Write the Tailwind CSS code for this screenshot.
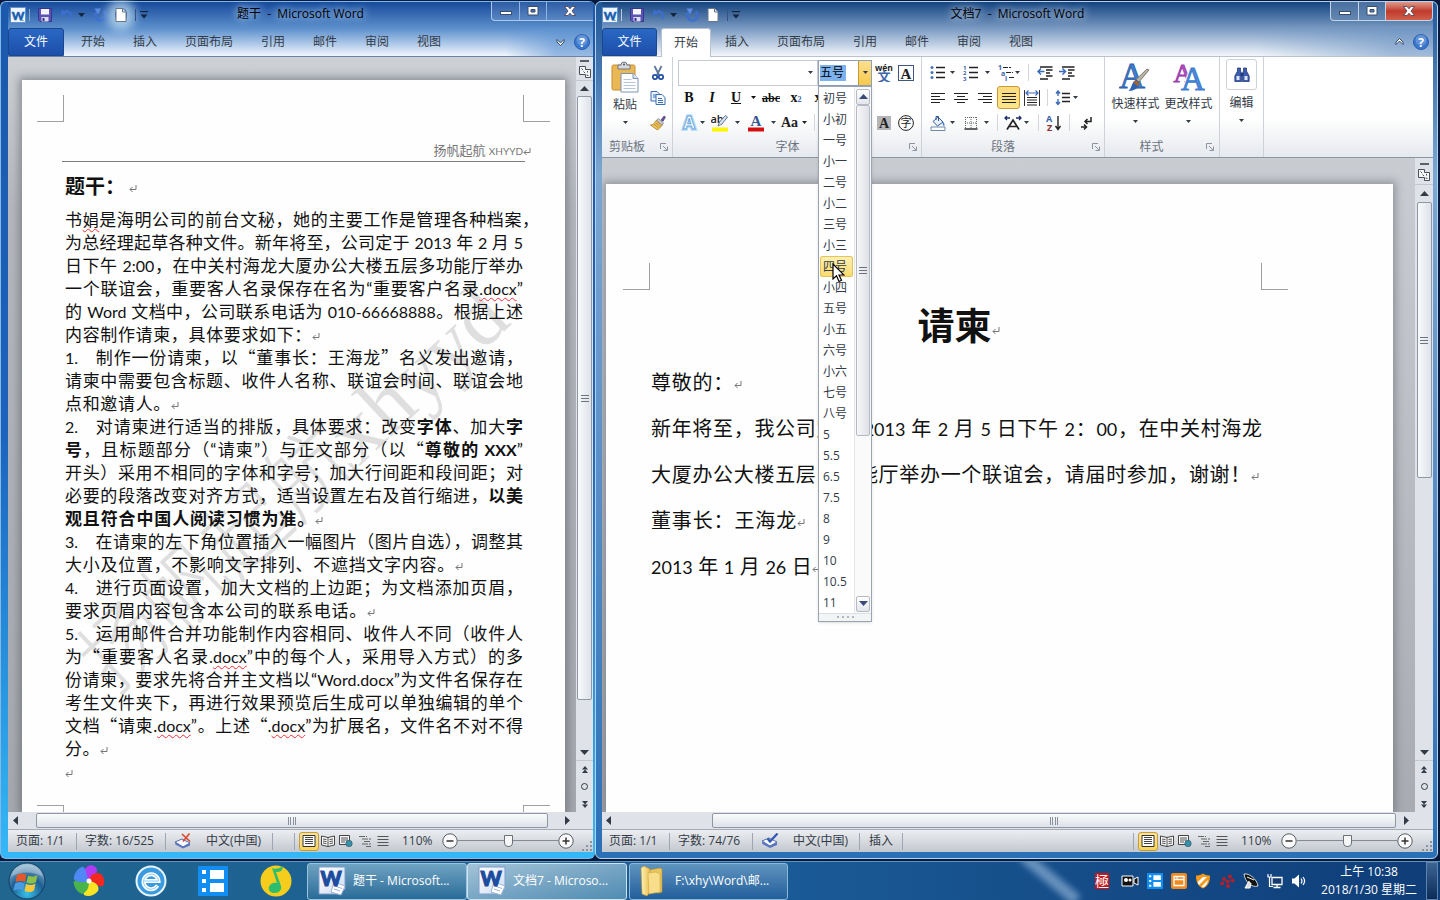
<!DOCTYPE html>
<html lang="zh-CN">
<head>
<meta charset="utf-8">
<title>文档7 - Microsoft Word</title>
<script src="https://cdn.jsdelivr.net/npm/@tailwindcss/browser@4"></script>
</head>
<body class="flex h-screen flex-col overflow-hidden bg-[#071a3d] font-['Open_Sans','Noto_Sans_CJK_SC',sans-serif] text-xs text-[#333b47]">

<svg class="absolute size-0" aria-hidden="true">
  <defs>
    <linearGradient id="gPaper" x1="0" y1="0" x2="1" y2="1"><stop offset="0" stop-color="#fff"/><stop offset="1" stop-color="#cfdcf0"/></linearGradient>
    <linearGradient id="gFolder" x1="0" y1="0" x2="1" y2="0"><stop offset="0" stop-color="#fff3b8"/><stop offset="1" stop-color="#e8bf4c"/></linearGradient>
    <radialGradient id="gOrb" cx=".5" cy=".85" r=".9"><stop offset="0" stop-color="#37c0ea"/><stop offset=".5" stop-color="#1e5f93"/><stop offset="1" stop-color="#a9cbe0"/></radialGradient>

    <symbol id="caret" viewBox="0 0 7 4"><path d="M0 0h7L3.500 4z" fill="currentColor"/></symbol>
    <symbol id="word" viewBox="0 0 16 16"><rect x=".5" y=".5" width="15" height="15" fill="#eef5fd" stroke="#5f93cf"/><path d="M10 13.500h4" stroke="#9ab"/><text x="8" y="12.500" font-size="12" font-weight="900" font-family="Lato" text-anchor="middle" fill="#1a5fae" stroke="#1a5fae" stroke-width=".5">W</text></symbol>
    <symbol id="save" viewBox="0 0 14 14"><path d="M.5.5h13v13H2l-1.500-1.500z" fill="#5a55b5" stroke="#39358c"/><path d="M3 1h8v5.500H3z" fill="#f4f5ff"/><path d="M3.500 9h7v4.500h-7z" fill="#dcdcf2"/><path d="M4.500 10h2v3h-2z" fill="#39358c"/></symbol>
    <symbol id="undo" viewBox="0 0 14 14"><path d="M3.500 5.500C7 1.500 13 4 10 11" fill="none" stroke="#3d6fd0" stroke-width="2.200"/><path d="M.5 7.500 2 1.500 6.500 6z" fill="#3d6fd0"/></symbol>
    <symbol id="redo" viewBox="0 0 14 14"><path d="M10.500 3.500A5 5 0 1 1 3.500 4.500" fill="none" stroke="#3d6fd0" stroke-width="2.600"/><path d="M1.500.5H8L5 6.500z" fill="#5b8be4"/></symbol>
    <symbol id="newdoc" viewBox="0 0 12 14"><path d="M1 .5h6.500l3.500 3.500v9.500H1z" fill="#fff" stroke="#6b7787"/><path d="M7.500.5V4H11" fill="#dde5ef" stroke="#6b7787"/></symbol>
    <symbol id="qat" viewBox="0 0 8 8"><path d="M0 .5h8" stroke="#14243c" stroke-width="1.400"/><path d="M.5 3.500h7L4 7.500z" fill="#14243c"/></symbol>
    <symbol id="help" viewBox="0 0 16 16"><circle cx="8" cy="8" r="7.500" fill="#3a78cf" stroke="#2a5cab"/><circle cx="8" cy="6" r="5.500" fill="#fff" opacity=".2"/><text x="8" y="12.500" font-size="12" font-weight="bold" font-family="Open Sans" text-anchor="middle" fill="#fff">?</text></symbol>
    <symbol id="chevdown" viewBox="0 0 9 8"><path d="M1 1.500 4.500 5 8 1.500V4L4.500 7.500 1 4z" fill="#fff" stroke="#2a3c58" stroke-width=".9"/></symbol>
    <symbol id="chevup" viewBox="0 0 9 8"><path d="M1 6.500 4.500 3 8 6.500V4L4.500.5 1 4z" fill="#fff" stroke="#2a3c58" stroke-width=".9"/></symbol>

    <symbol id="min" viewBox="0 0 12 10"><rect x=".5" y="5.500" width="11" height="3" fill="#fff" stroke="#3a4d68"/></symbol>
    <symbol id="max" viewBox="0 0 12 10"><path d="M1 .5h10v8.500H1zM4 3.500v2.500h4V3.500z" fill="#fff" fill-rule="evenodd" stroke="#3a4d68"/></symbol>
    <symbol id="close" viewBox="0 0 12 10"><path d="M.5.5h3.500L6 2.800 8 .5h3.500L8 5l3.500 4.500H8L6 7.200 4 9.500H.5L4 5z" fill="#fff" stroke="#4b3b4a" stroke-width=".8"/></symbol>

    <symbol id="ret" viewBox="0 0 8 8"><path d="M7 0v4.500H1M3.500 2 1 4.500 3.500 7" fill="none" stroke="#777" stroke-width="1"/></symbol>

    <symbol id="paste" viewBox="0 0 28 32"><rect x="1" y="4" width="23" height="25" rx="1.500" fill="#eab755" stroke="#c98d2c"/><path d="M7 8V4h3a3 3 0 0 1 6 0h3v4z" fill="#d5d9df" stroke="#6d7784"/><circle cx="13" cy="3.500" r="1" fill="#556"/><path d="M10 12.500h12l5 5V31H10z" fill="#fff" stroke="#7d93b3"/><path d="M22 12.500v5h5" fill="#dbe6f5" stroke="#7d93b3"/><path d="M12.500 18.500h8M12.500 21.500h12M12.500 24.500h12M12.500 27.500h12" stroke="#b5c5dc"/></symbol>
    <symbol id="cut" viewBox="0 0 16 16"><path d="M4.500 1 9 10M11.500 1 7 10" stroke="#5c7699" stroke-width="1.700" fill="none"/><circle cx="5" cy="12" r="2.200" fill="none" stroke="#1f4ea3" stroke-width="1.700"/><circle cx="11" cy="12" r="2.200" fill="none" stroke="#1f4ea3" stroke-width="1.700"/></symbol>
    <symbol id="copy" viewBox="0 0 16 16"><path d="M1 1.500h6l2.500 2.500v7H1z" fill="#e8f1fd" stroke="#3a6db4"/><path d="M3 5h4M3 7h4" stroke="#3a6db4"/><path d="M6 4.500h6l3 3v7H6z" fill="#f5f9ff" stroke="#3a6db4"/><path d="M8 8.500h4M8 10.500h5M8 12.500h5" stroke="#3a6db4"/></symbol>
    <symbol id="brush" viewBox="0 0 16 16"><path d="m11 5 3-4 1.500 1-2.500 4.500z" fill="#6b4a9a" stroke="#3d3768" stroke-width=".6"/><path d="m6.500 5 2-1.500 5 4.500-1.500 2.500z" fill="#c9ccd5" stroke="#777" stroke-width=".7"/><path d="M6 5.500 12 10.500 7.500 15 .5 10c3 0 4-2 5.500-4.500z" fill="#efc45a" stroke="#a97b25" stroke-width=".8"/><path d="m4 9 4.500 4M6 8l4.500 4" stroke="#a97b25" stroke-width=".7"/></symbol>
    <symbol id="launch" viewBox="0 0 8 8"><path d="M.5 6V.5H6" fill="none" stroke="#8a94a3"/><path d="m3 3 4 4M7.500 3.500v4h-4" fill="none" stroke="#8a94a3"/></symbol>

    <symbol id="wen" viewBox="0 0 18 18"><text x="9" y="6.500" font-size="8.500" font-weight="bold" font-family="Open Sans" text-anchor="middle" fill="#222">wén</text><text x="9" y="17" font-size="13" font-weight="bold" font-family="Noto Sans CJK SC" text-anchor="middle" fill="#3f65ab">文</text></symbol>
    <symbol id="abox" viewBox="0 0 16 16"><rect x=".5" y=".5" width="15" height="15" fill="#fff" stroke="#3c567f"/><text x="8" y="13.500" font-size="15" font-weight="bold" font-family="Liberation Serif" text-anchor="middle" fill="#222">A</text></symbol>
    <symbol id="agray" viewBox="0 0 14 14"><rect width="14" height="14" fill="#b5b5b8"/><text x="7" y="12" font-size="14" font-weight="bold" font-family="Liberation Serif" text-anchor="middle" fill="#222">A</text></symbol>
    <symbol id="zcirc" viewBox="0 0 16 16"><circle cx="8" cy="8" r="7.400" fill="#fff" stroke="#222"/><text x="8" y="12" font-size="11" font-family="Noto Sans CJK SC" text-anchor="middle" fill="#222">字</text></symbol>
    <symbol id="aglow" viewBox="0 0 18 18"><text x="9" y="15" font-size="17" font-weight="bold" font-family="Open Sans" text-anchor="middle" fill="#fff" stroke="#b5dbf5" stroke-width="3.500">A</text><text x="9" y="15" font-size="17" font-weight="bold" font-family="Open Sans" text-anchor="middle" fill="#fff" stroke="#6aa7dd" stroke-width="1">A</text></symbol>
    <symbol id="hilite" viewBox="0 0 18 18"><text x="6" y="8.500" font-size="11" font-weight="600" font-family="Open Sans" text-anchor="middle" fill="#222">ab</text><path d="m7 12 1.500-4L14.500 1.500l2 1.500-5.500 7z" fill="#d9e3f0" stroke="#53688c" stroke-width=".9"/><path d="M1 13.500h16v4H1z" fill="#fbf500"/></symbol>
    <symbol id="acolor" viewBox="0 0 18 18"><text x="9" y="12" font-size="15" font-weight="bold" font-family="Liberation Serif" text-anchor="middle" fill="#33588f">A</text><path d="M1 13.500h16v4H1z" fill="#d3100f"/></symbol>

    <symbol id="bul" viewBox="0 0 16 16"><path d="M6 2.500h9M6 7.500h9M6 12.500h9" stroke="#222" stroke-width="1.300"/><g fill="#4673b8"><circle cx="2" cy="2.500" r="1.500"/><circle cx="2" cy="7.500" r="1.500"/><circle cx="2" cy="12.500" r="1.500"/></g></symbol>
    <symbol id="num" viewBox="0 0 16 16"><path d="M6 2.500h9M6 7.500h9M6 12.500h9" stroke="#222" stroke-width="1.300"/><g font-size="6" font-weight="bold" font-family="Open Sans" fill="#3a62a8"><text x="0" y="4.500">1</text><text x="0" y="10">2</text><text x="0" y="15.500">3</text></g></symbol>
    <symbol id="multi" viewBox="0 0 16 16"><path d="M5 2.500h8M8 7.500h7M11 12.500h5" stroke="#222" stroke-width="1.200" stroke-dasharray="5 1"/><g font-size="7" font-weight="bold" font-family="Open Sans" fill="#3a62a8"><text x="0" y="5">1</text><text x="3" y="10.500">a</text><text x="7" y="15.500">i</text></g></symbol>
    <symbol id="outd" viewBox="0 0 16 16"><path d="M3 2h12.500M9 5h6.500M9 8h4M9 11h6.500M3 14h8" stroke="#222" stroke-width="1.400"/><path d="M7.500 6.500H1.500M4 3.500l-3 3 3 3" stroke="#3a6ab8" stroke-width="1.500" fill="none"/></symbol>
    <symbol id="ind" viewBox="0 0 16 16"><path d="M3 2h12.500M9 5h6.500M9 8h4M9 11h6.500M3 14h8" stroke="#222" stroke-width="1.400"/><path d="M0 6.500h6M3.500 3.500l3 3-3 3" stroke="#3a6ab8" stroke-width="1.500" fill="none"/></symbol>
    <symbol id="al" viewBox="0 0 16 16"><path d="M1 3.500h14M1 6.500h9M1 9.500h14M1 12.500h9" stroke="#222"/></symbol>
    <symbol id="ac" viewBox="0 0 16 16"><path d="M1 3.500h14M4 6.500h8M1 9.500h14M4 12.500h8" stroke="#222"/></symbol>
    <symbol id="ar" viewBox="0 0 16 16"><path d="M1 3.500h14M6 6.500h9M1 9.500h14M6 12.500h9" stroke="#222"/></symbol>
    <symbol id="aj" viewBox="0 0 16 16"><path d="M1 3.500h14M1 6.500h14M1 9.500h14M1 12.500h14" stroke="#222"/></symbol>
    <symbol id="ad" viewBox="0 0 16 16"><path d="M.5 0v16M15.500 0v16" stroke="#333"/><path d="M2 3h12M4.500.5 2 3l2.500 2.500M11.500.5 14 3l-2.500 2.500" stroke="#3a6ab8" fill="none" stroke-width="1.200"/><path d="M3 7.500h10M3 10h10M3 12.500h10M3 15h10" stroke="#222"/></symbol>
    <symbol id="lsp" viewBox="0 0 16 16"><path d="M7 3.500h8M7 7.500h8M7 11.500h8" stroke="#222" stroke-width="1.300"/><path d="M3 1v5M1 3.500 3 1l2 2.500M3 9v6M1 12l2 2.500L5 12" stroke="#3a6ab8" stroke-width="1.400" fill="none"/></symbol>
    <symbol id="bucket" viewBox="0 0 16 16"><path d="M1 12h14v3.500H1z" fill="#fff" stroke="#6f86ab"/><path d="m3 6.500 5-4.500 5 5-5.500 4z" fill="#e6eefa" stroke="#35588f"/><path d="M6 5V1.500h2.500V6" fill="none" stroke="#35588f"/><path d="M12.500 6.500c2 1 2 3 2 4.500-1.500 0-2-1.500-2-4.500z" fill="#3e78c8"/></symbol>
    <symbol id="bord" viewBox="0 0 16 16"><path d="M2 2.500h12M2 8h12M2.500 2v11M8 2v11M13.500 2v11" stroke="#666" stroke-dasharray="1 1" fill="none"/><path d="M1.500 14h13" stroke="#222" stroke-width="1.400"/></symbol>
    <symbol id="asian" viewBox="0 0 18 16"><path d="M3 14.500 9 5l6 9.500M5.500 11.500h7" stroke="#222" stroke-width="1.700" fill="none"/><path d="M1 3h5M3 1 1 3l2 2M17 3h-5M15 1l2 2-2 2" stroke="#1f2d6b" stroke-width="1.300" fill="none"/></symbol>
    <symbol id="sort" viewBox="0 0 16 16"><g font-size="9" font-weight="bold" font-family="Open Sans"><text x="0" y="7" fill="#3a62a8">A</text><text x="1" y="15.500" fill="#8a3032">Z</text></g><path d="M12 1v13M9.500 11l2.500 3.500L14.500 11" stroke="#222" stroke-width="1.400" fill="none"/></symbol>
    <symbol id="marks" viewBox="0 0 16 16"><path d="M13 2v4.500H7M9.500 4 7 6.500 9.500 9M3 12h5M6 9.500 8.500 12 6 14.500" stroke="#222" stroke-width="1.500" fill="none"/></symbol>
    <symbol id="qstyle" viewBox="0 0 32 32"><text x="13" y="27" font-size="36" font-family="Liberation Serif" text-anchor="middle" fill="#3f7fd0" stroke="#2c5ea8" stroke-width=".8">A</text><path d="m30 9-10 12-3-2.500L28 8z" fill="#b9b3a6" stroke="#6d675c" stroke-width=".8"/><path d="M17 18.500 20.500 22c-1 6-5 7.500-11 8 3-2 3-9 7.500-11.500z" fill="#2f62b1"/><path d="m16.500 19 4 3.500-1.500 3-4.500-4z" fill="#a5632b"/></symbol>
    <symbol id="cstyle" viewBox="0 0 32 32"><text x="10" y="21" font-size="26" font-family="Liberation Serif" text-anchor="middle" fill="#b453c0" stroke="#9a3fae" stroke-width=".9">A</text><text x="20" y="29" font-size="33" font-family="Liberation Serif" text-anchor="middle" fill="#3f7fd0" stroke="#fff" stroke-width="3">A</text><text x="20" y="29" font-size="33" font-family="Liberation Serif" text-anchor="middle" fill="#4a86d4" stroke="#3f7fd0" stroke-width="1">A</text></symbol>
    <symbol id="binoc" viewBox="0 0 16 16"><path d="M3.500 1h3v3l1 2v8.500H.8V9l2.700-5zM9.500 1h3v3l2.700 5v5.500H8.500V6l1-2z" fill="#3a5db0" stroke="#1d2f6e" stroke-width=".7"/><path d="M2.500 9h3v4h-3zM10.500 9h3v4h-3z" fill="#dbe6fb"/><path d="M6.500 6h3v3h-3z" fill="#26397c"/></symbol>

    <symbol id="rulerbtn" viewBox="0 0 12 12"><path d="M.5.5h6v3h5v8h-5v-3h-6z" fill="#f4f5f7" stroke="#4a5159"/><path d="M2.500 2.500 4 4M4.500 5.500 6 7M8.500 5v1.500M7.500 9l2 .5" stroke="#4a5159"/></symbol>
    <symbol id="dup" viewBox="0 0 8 8"><path d="M4 0 7 3.500H1zM4 3.500 7 7H1z" fill="#333b47"/></symbol>
    <symbol id="ddn" viewBox="0 0 8 8"><path d="M4 8 7 4.500H1zM4 4.500 7 1H1z" fill="#333b47"/></symbol>
    <symbol id="up" viewBox="0 0 9 5"><path d="M0 5h9L4.500 0z" fill="currentColor"/></symbol>
    <symbol id="down" viewBox="0 0 9 5"><path d="M0 0h9L4.500 5z" fill="currentColor"/></symbol>
    <symbol id="left" viewBox="0 0 5 9"><path d="M5 0v9L0 4.500z" fill="currentColor"/></symbol>
    <symbol id="right" viewBox="0 0 5 9"><path d="M0 0v9l5-4.500z" fill="currentColor"/></symbol>
    <symbol id="grip3" viewBox="0 0 8 8"><path d="M0 1.500h8M0 4.500h8M0 7.500h8" stroke="#6b7380"/></symbol>
    <symbol id="grip4" viewBox="0 0 8 8"><path d="M.5 0v8M2.500 0v8M5.500 0v8M7.500 0v8" stroke="#8a919c"/></symbol>
    <symbol id="corner" viewBox="0 0 12 12"><g fill="#8d949e"><path d="M9 1h2v2H9zM9 5h2v2H9zM9 9h2v2H9zM5 5h2v2H5zM5 9h2v2H5zM1 9h2v2H1z"/></g></symbol>

    <symbol id="proofx" viewBox="0 0 18 16"><path d="m1 9 7-3 8 4-7 4z" fill="#f6f9ff" stroke="#5670a5"/><path d="m1 9 .3 2.500L9 15.500v-2zM16 10v2.500L9 15.500v-2z" fill="#5b74c4"/><path d="m8 1 8 7.500M15.500.5 9 8.500" stroke="#d9482f" stroke-width="1.600"/></symbol>
    <symbol id="proofok" viewBox="0 0 18 16"><path d="m1 8 7-3 8 4-7 4z" fill="#f6f9ff" stroke="#5670a5"/><path d="m1 8 .3 3L9 15v-2zM16 9v3L9 15v-2z" fill="#5b74c4"/><path d="m6.500 5.500 2.500 3L16.500.5" stroke="#3156b4" stroke-width="2.200" fill="none"/></symbol>
    <symbol id="vprint" viewBox="0 0 14 12"><path d="M1 .5h12v11H1z" fill="#fff" stroke="#333"/><path d="M3 2.500h8M3 4.500h8M3 6.500h8M3 8.500h8" stroke="#444"/></symbol>
    <symbol id="vread" viewBox="0 0 14 12"><path d="M.5 1 7 2.500 13.500 1v9L7 11.500.5 10z" fill="#f7f7f7" stroke="#444"/><path d="M7 2v10M2 4l3.500.6M2 6l3.500.6M2 8l3.500.6M12 4l-3.500.6M12 6l-3.500.6M12 8l-3.500.6" stroke="#444" stroke-width=".9"/></symbol>
    <symbol id="vweb" viewBox="0 0 14 12"><path d="M.5.5h10v9H.5z" fill="#f7f7f7" stroke="#444"/><path d="M2 3h7M2 5h7M2 7h4" stroke="#555"/><circle cx="10" cy="8.500" r="3.200" fill="#3d8fa3" stroke="#27607a" stroke-width=".7"/></symbol>
    <symbol id="vout" viewBox="0 0 14 12"><path d="M1 1.500h8M4 4h9M6 6.500h7M4 9h9M8 11.500h5" stroke="#666" stroke-dasharray="6 1"/></symbol>
    <symbol id="vdraft" viewBox="0 0 14 12"><path d="M1.500 1.500h11M1.500 4.500h11M1.500 7.500h11M1.500 10.500h11" stroke="#555"/></symbol>
    <symbol id="cminus" viewBox="0 0 16 16"><circle cx="8" cy="8" r="7.200" fill="#fafafa" stroke="#555c66"/><path d="M4.500 8h7" stroke="#333" stroke-width="1.500"/></symbol>
    <symbol id="cplus" viewBox="0 0 16 16"><circle cx="8" cy="8" r="7.200" fill="#fafafa" stroke="#555c66"/><path d="M4.500 8h7M8 4.500v7" stroke="#333" stroke-width="1.500"/></symbol>

    <symbol id="wordbig" viewBox="0 0 30 30"><path d="M2 1h26v22l-5 5H2z" fill="url(#gPaper)" stroke="#7d9dcb"/><path d="m17 16 11 4-4 9-10-3z" fill="#fff" stroke="#9db3d6"/><path d="m18 20 7 2.500M17 23l6 2" stroke="#9db3d6"/><text x="14" y="20" font-size="20" font-weight="900" font-family="Lato" text-anchor="middle" fill="#1b4c9e" stroke="#1b4c9e">W</text></symbol>
    <symbol id="folder" viewBox="0 0 26 32"><path d="m10 5 11-2 2 1v23l-3 1-10-1z" fill="#e9c65f" stroke="#b98e28" stroke-width=".6"/><path d="m2 3 3-2 6 3v23l-3 4-5-2z" fill="url(#gFolder)" stroke="#b98e28" stroke-width=".6"/><path d="m9 8 8-1 4 2v18l-11 2z" fill="#f8de8a" stroke="#c79d38" stroke-width=".5"/></symbol>
    <symbol id="orb" viewBox="0 0 38 38"><circle cx="19" cy="19" r="18" fill="url(#gOrb)" stroke="#123c5c"/><path d="M9 13c3-2 6-2 9.500 0L17 20c-3-1.500-6-1.500-9.500 0z" fill="#e4592c"/><path d="M20 13.500c3 1.500 6 1.500 9.500-.5L28 20c-3 2-6 2-9.500.5z" fill="#8cc046"/><path d="M7 21.500c3-2 6-2 9.500 0L15 28.500c-3-1.500-6-1.500-9.500 0z" fill="#4a9be0"/><path d="M18 22c3 1.500 6 1.500 9.500-.5L26 28.500c-3 2-6 2-9.500.5z" fill="#f7c93a"/><path d="M3 15a16.500 16.500 0 0 1 32 0C27 9 11 9 3 15z" fill="#fff" opacity=".3"/></symbol>
    <symbol id="pinwheel" viewBox="0 0 32 32"><path d="M16 16C8 12 10 3 16 .5c6-1 8 3 8 5-1 5-5 6-8 10.500z" fill="#b23bf0"/><path d="M16 16c2-8 8-9 12-7 4 4 4 9 2 12-5 2-8-5-14-5z" fill="#f4281e"/><path d="M16 16c7 1 11 5 9 10-4 5-10 6-14 4-2-5 4-9 5-14z" fill="#fbe424"/><path d="M16 16c0 7-2 11-7 13C4 27 1 22 .5 17 5 12 10 16 16 16z" fill="#49b44b"/><path d="M16 16C10 18 4 18 .8 14 1 8 5 3 10 1.500 14 5 13 11 16 16z" fill="#4f87f5"/><circle cx="16" cy="16" r="2.500" fill="#fff"/></symbol>
    <symbol id="ie" viewBox="0 0 32 32"><circle cx="16" cy="16" r="14.500" fill="#3b9be0" stroke="#e8f5fd" stroke-width="2"/><path d="M22.500 20.500a7.500 7.500 0 1 1 1-4.500H9" fill="none" stroke="#fff" stroke-width="4"/><path d="M22.500 20.500a7.500 7.500 0 1 1 1-4.500H9" fill="none" stroke="#8fcdf3" stroke-width="1"/></symbol>
    <symbol id="tiles" viewBox="0 0 30 30"><rect width="30" height="30" fill="#128df2"/><path d="M12 4h14v9H12zM12 17h14v9H12zM4 4h4v4H4zM4 13h4v4H4zM4 22h4v4H4z" fill="#fff"/></symbol>
    <symbol id="music" viewBox="0 0 32 32"><circle cx="16" cy="16" r="15.500" fill="#f7cd1d"/><path d="M12 3c4 2 8 0 11-2l-1 4c-2 2-4 2-6 2l5 14c1 4-2 7-6 7s-7-2-6-6 6-5 8-4z" fill="#2cbd6e"/></symbol>

    <symbol id="cam" viewBox="0 0 18 16"><path d="M1 3h11v10H1zM13 6l4-2v8l-4-2z" fill="#111" stroke="#fff"/><circle cx="5" cy="7" r="2" fill="#fff"/><circle cx="9" cy="7" r="1.500" fill="#fff"/></symbol>
    <symbol id="calwin" viewBox="0 0 16 16"><rect width="16" height="16" rx="2" fill="#f08a1e"/><path d="M3 3.500h10v9H3zM3 6.500h10M5.500 5h1" fill="none" stroke="#fff" stroke-width="1.300"/></symbol>
    <symbol id="shield" viewBox="0 0 16 16"><path d="M8 .5c2 1.500 4.500 2 7 2 0 6-1.500 10.500-7 13-5.500-2.500-7-7-7-13 2.500 0 5-.5 7-2z" fill="#f59a1d"/><path d="M12 4 4 12c-.6-1-1-1.500-1.300-3L8 4zM13 7l-6.500 6.500 1.500 1c3-1.500 4.500-4 5-7.500z" fill="#fff"/></symbol>
    <symbol id="flower" viewBox="0 0 16 16"><g fill="#b51f2b"><circle cx="5" cy="6" r="2"/><circle cx="11" cy="3.500" r="2"/><circle cx="3" cy="10.500" r="2"/><circle cx="13.500" cy="7.500" r="2"/><circle cx="9" cy="13" r="2"/><circle cx="8.500" cy="8.500" r="2"/></g></symbol>
    <symbol id="dish" viewBox="0 0 16 16"><path d="M1 1c5-1 13 5 14 12-6 2-13-4-14-12z" fill="#111" stroke="#fff" stroke-width=".8"/><path d="m6 8-4 7h5l1-5" fill="#ddd" stroke="#fff"/><path d="m4 4 7 3" stroke="#fff"/></symbol>
    <symbol id="net" viewBox="0 0 16 16"><path d="M5 4.500h10v7H5zM10 12v2.500M6.500 14.500h7" fill="#153b6c" stroke="#fff" stroke-width="1.300"/><path d="M1 1v3h3V1M2.500 4v9.500H6" fill="none" stroke="#fff" stroke-width="1.200"/></symbol>
    <symbol id="vol" viewBox="0 0 16 16"><path d="M1 5.500h2.500L8 1.500v13l-4.500-4H1z" fill="#fff"/><path d="M10 5.500c1.200 1.500 1.200 3.500 0 5M12 4c2 2.500 2 5.500 0 8" fill="none" stroke="#fff" stroke-width="1.200"/></symbol>
  </defs>
</svg>

<main class="grid min-h-0 flex-1 grid-cols-[595fr_845fr] pt-px pb-[2px]">

  <!-- 题干 window -->
  <section aria-label="题干" class="flex min-w-0 flex-col rounded-t-md rounded-b-md border border-r-0 border-[#7fb9ea] bg-linear-to-b from-[#1c58ab] via-[#1d62bb] to-[#35b8f7] pl-[7px] pr-[2px] pb-[6px]">
    <header class="flex h-[55px] shrink-0 flex-col border-b border-[#6c83a5] bg-linear-to-b from-[#164a9b] via-[#5e91cd] via-50% to-[#f2f7fd]">
      <div class="grid h-[26px] grid-cols-[1fr_auto_1fr] items-center">
        <div class="flex items-center pl-[2px]">
          <svg class="size-4"><use href="#word"/></svg>
          <span class="ml-[3px] h-3 w-px bg-[#8aa9cf]"></span>
          <button aria-label="保存" class="ml-2"><svg class="size-3.5"><use href="#save"/></svg></button>
          <button aria-label="撤消" class="ml-2"><svg class="size-3.5"><use href="#undo"/></svg></button>
          <button aria-label="撤消列表" class="ml-1 text-[#14243c]"><svg class="h-1 w-[7px]"><use href="#caret"/></svg></button>
          <button aria-label="重复" class="ml-2"><svg class="size-3.5"><use href="#redo"/></svg></button>
          <button aria-label="新建" class="ml-2 rounded-full shadow-[0_0_10px_8px_rgba(225,250,255,0.6)]"><svg class="h-3.5 w-3"><use href="#newdoc"/></svg></button>
          <span class="ml-2 h-3 w-px bg-[#35537e]"></span>
          <button aria-label="自定义快速访问工具栏" class="ml-1"><svg class="size-2"><use href="#qat"/></svg></button>
        </div>
        <h2 class="whitespace-pre px-2 pb-[2px] text-black [text-shadow:0_0_8px_#a9c8ee,0_0_8px_#a9c8ee]">题干  -  Microsoft Word</h2>
        <div class="flex h-[19px] self-start justify-self-end rounded-bl-sm border-b border-l border-[#a9c8ec] bg-white/10">
          <button aria-label="最小化" class="flex w-7 items-center justify-center border-r border-[#8fb4e0]"><svg class="h-2.5 w-3"><use href="#min"/></svg></button>
          <button aria-label="最大化" class="flex w-[27px] items-center justify-center border-r border-[#8fb4e0]"><svg class="h-2.5 w-3"><use href="#max"/></svg></button>
          <button aria-label="关闭" class="flex w-[46px] items-center justify-center"><svg class="h-2.5 w-3"><use href="#close"/></svg></button>
        </div>
      </div>
      <nav class="flex h-7 items-stretch">
        <button class="mr-[3px] w-14 rounded-t-[3px] border border-[#1a4790] bg-linear-to-b from-[#2a68c4] to-[#1c4faa] text-white">文件</button>
        <button class="px-3.5">开始</button><button class="px-3.5">插入</button><button class="px-3.5">页面布局</button><button class="px-3.5">引用</button><button class="px-3.5">邮件</button><button class="px-3.5">审阅</button><button class="px-3.5">视图</button>
        <span class="flex-1 bg-linear-to-r from-transparent via-transparent to-[#5e93d2]/60"></span>
        <div class="flex items-center gap-[9px] bg-[#5e93d2]/60 pr-[3px]">
          <button aria-label="展开功能区"><svg class="h-2 w-[9px]"><use href="#chevdown"/></svg></button>
          <button aria-label="帮助"><svg class="size-4"><use href="#help"/></svg></button>
        </div>
      </nav>
    </header>

    <div class="flex min-h-0 flex-1">
      <div class="flex min-w-0 flex-1 flex-col">
        <div class="flex min-h-0 flex-1 overflow-hidden bg-linear-to-b from-[#cdd1d5] via-[#b4b8bd] via-20% to-[#a5a8ad] pt-[23px] pr-[11px] pl-3.5">
          <article class="relative min-w-0 flex-1 bg-[#fefefe] px-[43px] pt-[61px] font-['Lato','Noto_Sans_CJK_SC',sans-serif] text-[17px] leading-[23px] text-[#111] shadow-[0_0_8px_3px_rgba(70,75,85,0.45)]">
            <span class="absolute top-[15px] left-[15px] h-[27px] w-[27px] border-r border-b border-[#a0a0a0]"></span>
            <span class="absolute top-[15px] right-[15px] h-[27px] w-[27px] border-b border-l border-[#a0a0a0]"></span>
            <span class="absolute bottom-0 left-[15px] h-[7px] w-[27px] border-t border-r border-[#a0a0a0]"></span>
            <span class="absolute right-[15px] bottom-0 h-[7px] w-[27px] border-t border-l border-[#a0a0a0]"></span>
            <div aria-hidden="true" class="absolute inset-0 flex items-center justify-center overflow-hidden pt-[86px]">
              <span class="-rotate-[43deg] font-['Liberation_Serif','Noto_Sans_CJK_SC',serif] text-[84px] leading-none font-light whitespace-nowrap text-[#dfdfdf]">扬帆起航xhyyd</span>
            </div>
            <div class="relative">
              <p class="-mx-[3px] flex h-[21px] items-center justify-end border-b border-[#7d7d7d] text-[13px] text-[#777]">
                <span class="-mr-[6px]">扬帆起航 <span class="text-[10px]">XHYYD</span><svg class="inline size-2"><use href="#ret"/></svg></span>
              </p>
              <h1 class="mt-[10px] text-xl leading-7 font-bold">题干：<svg class="ml-1 inline size-2"><use href="#ret"/></svg></h1>
              <div class="mt-2 -mr-[1px] [&_b]:font-bold [&_em]:font-['Noto_Sans_CJK_SC'] [&_em]:leading-none [&_em]:not-italic [&_i]:text-base [&_i]:leading-none [&_i]:not-italic [&_p]:min-h-[23px] [&_p>span]:block [&_p>span]:h-[23px] [&_p>span]:text-justify [&_p>span]:whitespace-nowrap [&_p>span]:[text-align-last:justify] [&_u]:text-base [&_u]:leading-none [&_u]:decoration-red-500 [&_u]:decoration-wavy [&_u]:decoration-1 [&_u]:underline-offset-2">
                <p><span class="-mr-4">书<u>娟</u>是海明公司的前台文秘，她的主要工作是管理各种档案，</span>
                <span>为总经理起草各种文件。新年将至，公司定于 <i>2013</i> 年 <i>2</i> 月 <i>5</i></span>
                <span>日下午 <i>2:00</i>，在中关村海龙大厦办公大楼五层多功能厅举办</span>
                <span>一个联谊会，重要客人名录保存在名为“重要客户名录<u>.docx</u>”</span>
                <span>的 <i>Word</i> 文档中，公司联系电话为 <i>010-66668888</i>。根据上述</span>
                <span class="w-[255px]">内容制作请柬，具体要求如下：<svg class="inline size-2"><use href="#ret"/></svg></span></p>
                <p><span><i class="inline-block w-[30px]">1.</i>制作一份请柬，以<em>“</em>董事长：王海龙<em>”</em>名义发出邀请，</span>
                <span>请柬中需要包含标题、收件人名称、联谊会时间、联谊会地</span>
                <span class="w-[114px]">点和邀请人。<svg class="inline size-2"><use href="#ret"/></svg></span></p>
                <p><span><i class="inline-block w-[30px]">2.</i>对请柬进行适当的排版，具体要求：改变<b>字体</b>、加大<b>字</b></span>
                <span><b>号</b>，且标题部分（“请柬”）与正文部分（以<em>“</em><b>尊敬的 <i>XXX</i></b>”</span>
                <span>开头）采用不相同的字体和字号；加大行间距和段间距；对</span>
                <span>必要的段落改变对齐方式，适当设置左右及首行缩进，<b>以美</b></span>
                <span class="w-[258px]"><b>观且符合中国人阅读习惯为准。</b><svg class="inline size-2"><use href="#ret"/></svg></span></p>
                <p><span><i class="inline-block w-[30px]">3.</i>在请柬的左下角位置插入一幅图片（图片自选），调整其</span>
                <span class="w-[398px]">大小及位置，不影响文字排列、不遮挡文字内容。<svg class="inline size-2"><use href="#ret"/></svg></span></p>
                <p><span><i class="inline-block w-[30px]">4.</i>进行页面设置，加大文档的上边距；为文档添加页眉，</span>
                <span class="w-[310px]">要求页眉内容包含本公司的联系电话。<svg class="inline size-2"><use href="#ret"/></svg></span></p>
                <p><span><i class="inline-block w-[30px]">5.</i>运用邮件合并功能制作内容相同、收件人不同（收件人</span>
                <span>为<em>“</em>重要客人名录.<u>docx</u>”中的每个人，采用导入方式）的多</span>
                <span>份请柬，要求先将合并主文档以“<i>Word.docx</i>”为文件名保存在</span>
                <span>考生文件夹下，再进行效果预览后生成可以单独编辑的单个</span>
                <span>文档<em>“</em>请柬.<u>docx</u>”。上述<em>“</em>.<u>docx</u>”为扩展名，文件名不对不得</span>
                <span class="w-[43px]">分。<svg class="inline size-2"><use href="#ret"/></svg></span></p>
                <p><svg class="inline size-2"><use href="#ret"/></svg></p>
              </div>
            </div>
          </article>
        </div>
        <div class="flex h-[17px] shrink-0 items-center bg-[#dfe3e9] text-[#333b47]">
          <button aria-label="向左滚动" class="flex w-7 pl-[5px]"><svg class="h-[9px] w-[5px]"><use href="#left"/></svg></button>
          <div class="flex h-[15px] flex-1 items-center justify-center rounded-xs border border-[#8f97a3] bg-linear-to-b from-[#fafbfc] to-[#dde2e9]"><svg class="size-2"><use href="#grip4"/></svg></div>
          <button aria-label="向右滚动" class="flex w-7 justify-end pr-[6px]"><svg class="h-[9px] w-[5px]"><use href="#right"/></svg></button>
        </div>
      </div>
      <div class="flex w-[17px] shrink-0 flex-col items-center bg-[#dfe3e9] pb-[17px] text-[#333b47]">
        <span class="mt-[3px] h-[2px] w-[9px] bg-[#59616c]"></span>
        <button aria-label="标尺" class="mt-1"><svg class="block size-3"><use href="#rulerbtn"/></svg></button>
        <button aria-label="向上滚动" class="mt-[2px] flex h-4 w-full items-center justify-center border-t border-[#c3c8d0]"><svg class="h-[5px] w-[9px]"><use href="#up"/></svg></button>
        <div class="flex w-[15px] flex-[603] items-center justify-center rounded-xs border border-[#8f97a3] bg-linear-to-r from-[#f8fafc] to-[#dde2e9]"><svg class="size-2"><use href="#grip3"/></svg></div>
        <span class="flex-[45]"></span>
        <button aria-label="向下滚动" class="flex h-4 w-full items-center justify-center border-b border-[#c3c8d0]"><svg class="h-[5px] w-[9px]"><use href="#down"/></svg></button>
        <button aria-label="前一页" class="flex h-[17px] items-center"><svg class="size-2"><use href="#dup"/></svg></button>
        <button aria-label="选择浏览对象" class="flex h-[17px] items-center"><span class="size-[7px] rounded-full border border-[#333b47]"></span></button>
        <button aria-label="下一页" class="flex h-[17px] items-center"><svg class="size-2"><use href="#ddn"/></svg></button>
      </div>
    </div>

    <footer class="flex h-[23px] shrink-0 items-center border-t border-[#a4abb6] bg-linear-to-b from-[#eceef1] to-[#c3c8cf] pl-2 whitespace-nowrap">
      <span class="w-[60px]">页面: 1/1</span><span class="h-[17px] w-px bg-[#9fa6b1]"></span>
      <span class="w-[88px] pl-2">字数: 16/525</span><span class="h-[17px] w-px bg-[#9fa6b1]"></span>
      <button aria-label="校对错误" class="mr-3.5 ml-2"><svg class="h-4 w-[18px]"><use href="#proofx"/></svg></button>
      <span class="w-[66px]">中文(中国)</span><span class="h-[17px] w-px bg-[#9fa6b1]"></span>
      <span class="flex-1"></span><span class="mr-1 h-[17px] w-px bg-[#9fa6b1]"></span>
      <button aria-label="页面视图" class="flex h-[19px] w-5 items-center justify-center rounded-[3px] border border-[#c89a35] bg-linear-to-b from-[#fbe39a] to-[#fbd35a]"><svg class="h-3 w-3.5"><use href="#vprint"/></svg></button>
      <button aria-label="阅读版式" class="ml-[2px] flex"><svg class="h-3 w-3.5"><use href="#vread"/></svg></button>
      <button aria-label="Web 版式" class="ml-1 flex"><svg class="h-3 w-3.5"><use href="#vweb"/></svg></button>
      <button aria-label="大纲视图" class="ml-[5px] flex"><svg class="h-3 w-3.5"><use href="#vout"/></svg></button>
      <button aria-label="草稿" class="ml-1 flex"><svg class="h-3 w-3.5"><use href="#vdraft"/></svg></button>
      <span class="ml-3 w-10">110%</span>
      <button aria-label="缩小" class="flex"><svg class="size-4"><use href="#cminus"/></svg></button>
      <input type="range" aria-label="显示比例" value="50" class="h-3.5 w-[100px] appearance-none bg-linear-to-b from-transparent from-46% via-[#7f8792] via-46% to-transparent to-54% [&::-webkit-slider-thumb]:h-3 [&::-webkit-slider-thumb]:w-[9px] [&::-webkit-slider-thumb]:appearance-none [&::-webkit-slider-thumb]:rounded-b-sm [&::-webkit-slider-thumb]:border [&::-webkit-slider-thumb]:border-[#69717c] [&::-webkit-slider-thumb]:bg-[#f6f6f6]">
      <button aria-label="放大" class="flex"><svg class="size-4"><use href="#cplus"/></svg></button>
      <svg class="ml-[7px] size-3 self-end"><use href="#corner"/></svg>
    </footer>
  </section>

  <!-- 文档7 window -->
  <section aria-label="文档7" class="mr-[2px] flex min-w-0 flex-col rounded-t-md rounded-b-md border border-[#b8d2ec] bg-linear-to-b from-[#1f5797] via-[#7ba7d3] via-20% to-[#2a70b6] pr-1 pb-[6px] pl-[6px]">
    <header class="flex h-[55px] shrink-0 flex-col border-b border-[#b9c2ce] bg-linear-to-b from-[#124480] via-[#7c9cc3] via-50% to-[#f4f7fb]">
      <div class="grid h-[26px] grid-cols-[1fr_auto_1fr] items-center">
        <div class="flex items-center">
          <svg class="size-4"><use href="#word"/></svg>
          <span class="ml-[3px] h-3 w-px bg-[#b9cbe2]"></span>
          <button aria-label="保存" class="ml-2"><svg class="size-3.5"><use href="#save"/></svg></button>
          <button aria-label="撤消" class="ml-2"><svg class="size-3.5"><use href="#undo"/></svg></button>
          <button aria-label="撤消列表" class="ml-1 text-[#14243c]"><svg class="h-1 w-[7px]"><use href="#caret"/></svg></button>
          <button aria-label="重复" class="ml-2"><svg class="size-3.5"><use href="#redo"/></svg></button>
          <button aria-label="新建" class="ml-2"><svg class="h-3.5 w-3"><use href="#newdoc"/></svg></button>
          <span class="ml-2 h-3 w-px bg-[#35537e]"></span>
          <button aria-label="自定义快速访问工具栏" class="ml-1"><svg class="size-2"><use href="#qat"/></svg></button>
        </div>
        <h2 class="whitespace-pre px-2 pb-[2px] text-black [text-shadow:0_0_8px_#b9cbe2,0_0_8px_#b9cbe2]">文档7  -  Microsoft Word</h2>
        <div class="flex h-[19px] self-start justify-self-end rounded-b-sm border-x border-b border-[#c4d3e6] bg-[#6d8db5]/60">
          <button aria-label="最小化" class="flex w-7 items-center justify-center border-r border-[#c4d3e6]"><svg class="h-2.5 w-3"><use href="#min"/></svg></button>
          <button aria-label="最大化" class="flex w-[27px] items-center justify-center border-r border-[#c4d3e6]"><svg class="h-2.5 w-3"><use href="#max"/></svg></button>
          <button aria-label="关闭" class="flex w-[46px] items-center justify-center rounded-br-sm bg-linear-to-b from-[#dc9a8d] via-[#c0392b] via-50% to-[#d0604a]"><svg class="h-2.5 w-3"><use href="#close"/></svg></button>
        </div>
      </div>
      <nav class="flex h-7 items-stretch">
        <button class="mr-1 w-[55px] rounded-t-[3px] border border-[#1a4790] bg-linear-to-b from-[#2a68c4] to-[#1c4faa] text-white">文件</button>
        <button class="relative -mb-px rounded-t-[3px] border border-b-0 border-[#b9c2ce] bg-white px-3">开始</button>
        <button class="px-3.5">插入</button><button class="px-3.5">页面布局</button><button class="px-3.5">引用</button><button class="px-3.5">邮件</button><button class="px-3.5">审阅</button><button class="px-3.5">视图</button>
        <span class="flex-1 bg-linear-to-r from-transparent via-transparent via-60% to-[#6d95c4]/60"></span>
        <div class="flex items-center gap-[9px] bg-[#6d95c4]/60 pr-1">
          <button aria-label="功能区最小化"><svg class="h-2 w-[9px]"><use href="#chevup"/></svg></button>
          <button aria-label="帮助"><svg class="size-4"><use href="#help"/></svg></button>
        </div>
      </nav>
    </header>

    <div class="relative z-10 flex h-[101px] shrink-0 border-b border-[#8d95a1] bg-linear-to-b from-white from-60% to-[#e6e9ee] text-[#333b47] [&_button]:flex [&_button]:shrink-0 [&_button]:items-center [&_button]:justify-center">
      <!-- clipboard -->
      <div class="flex w-[71px] shrink-0 flex-col border-r border-[#cdd2d9]">
        <div class="flex h-20 pl-2">
          <button class="w-[30px] flex-col justify-start! pt-1"><svg class="h-8 w-7 shrink-0"><use href="#paste"/></svg><span class="mt-[2px] leading-5">粘贴</span><svg class="mt-[6px] h-[3px] w-[5px]"><use href="#caret"/></svg></button>
          <div class="ml-[10px] flex flex-col pt-[3px]">
            <button aria-label="剪切" class="h-[25px]"><svg class="size-4"><use href="#cut"/></svg></button>
            <button aria-label="复制" class="h-[25px]"><svg class="size-4"><use href="#copy"/></svg></button>
            <button aria-label="格式刷" class="h-[25px]"><svg class="size-4"><use href="#brush"/></svg></button>
          </div>
        </div>
        <div class="flex h-5 items-center justify-between pr-1 pl-[7px] text-[#6a7380]">剪贴板<button aria-label="剪贴板对话框"><svg class="size-2"><use href="#launch"/></svg></button></div>
      </div>
      <!-- font -->
      <div class="flex w-[249px] shrink-0 flex-col border-r border-[#cdd2d9] pl-[5px]">
        <div class="flex h-20 flex-col pt-[3px]">
          <div class="flex h-[25px] items-center">
            <div class="flex h-[26px] w-[140px] items-center border border-[#c6cbd3] bg-white pr-1"><input aria-label="字体" class="min-w-0 flex-1 bg-transparent"><button aria-label="字体列表"><svg class="h-[3px] w-[5px]"><use href="#caret"/></svg></button></div>
            <div class="relative flex h-[26px] w-[54px] items-center border border-[#8fa0b8] bg-white">
              <input aria-label="字号" value="五号" class="ml-px h-4 w-[26px] bg-[#7eb2ee] text-black">
              <button aria-label="字号列表" class="ml-auto h-full w-[13px] border-l border-[#c89a35] bg-linear-to-b from-[#fbe08f] to-[#f8c846]"><svg class="h-[3px] w-[5px]"><use href="#caret"/></svg></button>
              <div class="absolute top-[25px] -left-px z-20 w-[54px] border border-[#9aa3b0] bg-white shadow-sm">
                <div class="flex">
                  <ul role="listbox" aria-label="字号" class="flex-1 pt-px [&_li]:h-[21px] [&_li]:pl-1 [&_li]:leading-[21px]">
                    <li role="option">初号</li><li role="option">小初</li><li role="option">一号</li><li role="option">小一</li><li role="option">二号</li><li role="option">小二</li><li role="option">三号</li><li role="option">小三</li><li role="option" aria-selected="true" class="mx-px rounded-[3px] bg-linear-to-b from-[#fdf2b5] to-[#f8d968] pl-[3px]! ring-1 ring-[#e5c35c] ring-inset">四号</li><li role="option">小四</li><li role="option">五号</li><li role="option">小五</li><li role="option">六号</li><li role="option">小六</li><li role="option">七号</li><li role="option">八号</li><li role="option">5</li><li role="option">5.5</li><li role="option">6.5</li><li role="option">7.5</li><li role="option">8</li><li role="option">9</li><li role="option">10</li><li role="option">10.5</li><li role="option">11</li>
                  </ul>
                  <div class="flex w-[17px] flex-col border-l border-[#e3e5ea] bg-[#fafafb] p-px pt-[2px] text-[#3a4a75]">
                    <button aria-label="向上" class="h-4 rounded-xs border border-[#b5bac4] bg-linear-to-b from-white to-[#e2e5ea]"><svg class="h-[5px] w-[9px]"><use href="#up"/></svg></button>
                    <div class="flex flex-[331] items-center justify-center rounded-xs border border-[#b5bac4] bg-linear-to-r from-[#f6f6f8] to-[#e0e1e7]"><svg class="size-2"><use href="#grip3"/></svg></div>
                    <span class="flex-[160]"></span>
                    <button aria-label="向下" class="h-4 rounded-xs border border-[#b5bac4] bg-linear-to-b from-white to-[#e2e5ea]"><svg class="h-[5px] w-[9px]"><use href="#down"/></svg></button>
                  </div>
                </div>
                <div class="flex h-2 items-center justify-center gap-[3px] border-t border-[#dcdfe5] bg-[#f3f4f6]"><span class="size-[2px] bg-[#b3b8c0]"></span><span class="size-[2px] bg-[#b3b8c0]"></span><span class="size-[2px] bg-[#b3b8c0]"></span><span class="size-[2px] bg-[#b3b8c0]"></span></div>
              </div>
              <svg class="absolute top-[202px] left-[13px] z-30 h-[20px] w-[13px]" viewBox="0 0 13 20"><path d="M1 1v15l3.500-3.200L7 18.500l2.500-1.200-2.500-5.300h5z" fill="#fff" stroke="#000" stroke-width="1.200"/></svg>
            </div>
            <button aria-label="拼音指南" class="ml-[3px]"><svg class="size-[18px]"><use href="#wen"/></svg></button>
            <button aria-label="字符边框" class="ml-[5px]"><svg class="size-4"><use href="#abox"/></svg></button>
          </div>
          <div class="flex h-[25px] items-center font-['Liberation_Serif',serif] text-sm font-bold text-[#111]">
            <button aria-label="加粗" class="w-[22px]">B</button>
            <button aria-label="倾斜" class="w-6 italic">I</button>
            <button aria-label="下划线" class="w-6 underline">U</button>
            <button aria-label="下划线列表" class="w-2.5"><svg class="h-[3px] w-[5px]"><use href="#caret"/></svg></button>
            <button aria-label="删除线" class="w-[26px] text-xs line-through">abc</button>
            <button aria-label="下标" class="w-6">x<sub class="text-[8px] text-[#3a62a8]">2</sub></button>
            <button aria-label="上标" class="w-6">x<sup class="text-[8px] text-[#3a62a8]">2</sup></button>
          </div>
          <div class="flex h-[25px] items-center">
            <button aria-label="文本效果" class="w-[21px]"><svg class="size-[18px]"><use href="#aglow"/></svg></button>
            <button aria-label="文本效果列表" class="w-[7px]"><svg class="h-[3px] w-[5px]"><use href="#caret"/></svg></button>
            <button aria-label="突出显示" class="w-7"><svg class="size-[18px]"><use href="#hilite"/></svg></button>
            <button aria-label="突出显示列表" class="w-[7px]"><svg class="h-[3px] w-[5px]"><use href="#caret"/></svg></button>
            <button aria-label="字体颜色" class="w-[29px]"><svg class="size-[18px]"><use href="#acolor"/></svg></button>
            <button aria-label="字体颜色列表" class="w-[7px]"><svg class="h-[3px] w-[5px]"><use href="#caret"/></svg></button>
            <button aria-label="更改大小写" class="ml-1 font-['Liberation_Serif',serif] text-sm font-bold text-[#222]">Aa<svg class="ml-1 h-[3px] w-[5px]"><use href="#caret"/></svg></button>
            <span class="ml-[7px] h-[17px] w-px bg-[#d3d6dc]"></span>
            <button aria-label="字符底纹" class="ml-auto"><svg class="size-3.5"><use href="#agray"/></svg></button>
            <button aria-label="带圈字符" class="mr-[7px] ml-[7px]"><svg class="size-4"><use href="#zcirc"/></svg></button>
          </div>
        </div>
        <div class="grid h-5 grid-cols-[1fr_auto_1fr] items-center pr-1 text-[#6a7380]"><span class="col-start-2 pr-5">字体</span><button aria-label="字体对话框" class="justify-self-end"><svg class="size-2"><use href="#launch"/></svg></button></div>
      </div>
      <!-- paragraph -->
      <div class="flex w-[183px] shrink-0 flex-col border-r border-[#cdd2d9]">
        <div class="flex h-20 flex-col pt-[3px] pl-2">
          <div class="flex h-[25px] items-center">
            <button aria-label="项目符号"><svg class="size-4"><use href="#bul"/></svg></button><button aria-label="项目符号列表" class="ml-1"><svg class="h-[3px] w-[5px]"><use href="#caret"/></svg></button>
            <button aria-label="编号" class="ml-2"><svg class="size-4"><use href="#num"/></svg></button><button aria-label="编号列表" class="ml-[6px]"><svg class="h-[3px] w-[5px]"><use href="#caret"/></svg></button>
            <button aria-label="多级列表" class="ml-2"><svg class="size-4"><use href="#multi"/></svg></button><button aria-label="多级列表选项" class="ml-px"><svg class="h-[3px] w-[5px]"><use href="#caret"/></svg></button>
            <span class="ml-2 h-[17px] w-px bg-[#d3d6dc]"></span>
            <button aria-label="减少缩进量" class="ml-2"><svg class="size-4"><use href="#outd"/></svg></button>
            <button aria-label="增加缩进量" class="ml-[6px]"><svg class="size-4"><use href="#ind"/></svg></button>
          </div>
          <div class="flex h-[25px] items-center">
            <button aria-label="左对齐"><svg class="size-4"><use href="#al"/></svg></button>
            <button aria-label="居中" class="ml-[7px]"><svg class="size-4"><use href="#ac"/></svg></button>
            <button aria-label="右对齐" class="ml-2"><svg class="size-4"><use href="#ar"/></svg></button>
            <button aria-label="两端对齐" class="ml-1 size-[23px] rounded-[3px] border border-[#c89a35] bg-linear-to-b from-[#fbdc80] to-[#fde688]"><svg class="size-4"><use href="#aj"/></svg></button>
            <button aria-label="分散对齐" class="ml-1"><svg class="size-4"><use href="#ad"/></svg></button>
            <span class="ml-[7px] h-[17px] w-px bg-[#d3d6dc]"></span>
            <button aria-label="行距" class="ml-[7px]"><svg class="size-4"><use href="#lsp"/></svg></button><button aria-label="行距列表" class="ml-[2px]"><svg class="h-[3px] w-[5px]"><use href="#caret"/></svg></button>
          </div>
          <div class="flex h-[25px] items-center">
            <button aria-label="底纹"><svg class="size-4"><use href="#bucket"/></svg></button><button aria-label="底纹列表" class="ml-1"><svg class="h-[3px] w-[5px]"><use href="#caret"/></svg></button>
            <button aria-label="边框" class="ml-2"><svg class="size-4"><use href="#bord"/></svg></button><button aria-label="边框列表" class="ml-[5px]"><svg class="h-[3px] w-[5px]"><use href="#caret"/></svg></button>
            <span class="ml-2 h-[17px] w-px bg-[#d3d6dc]"></span>
            <button aria-label="中文版式" class="ml-[6px]"><svg class="h-4 w-[18px]"><use href="#asian"/></svg></button><button aria-label="中文版式列表" class="ml-[2px]"><svg class="h-[3px] w-[5px]"><use href="#caret"/></svg></button>
            <span class="ml-[9px] h-[17px] w-px bg-[#d3d6dc]"></span>
            <button aria-label="排序" class="ml-[7px]"><svg class="size-4"><use href="#sort"/></svg></button>
            <span class="ml-[7px] h-[17px] w-px bg-[#d3d6dc]"></span>
            <button aria-label="显示编辑标记" class="ml-2"><svg class="size-4"><use href="#marks"/></svg></button>
          </div>
        </div>
        <div class="grid h-5 grid-cols-[1fr_auto_1fr] items-center pr-1 text-[#6a7380]"><span class="col-start-2 pr-4">段落</span><button aria-label="段落对话框" class="justify-self-end"><svg class="size-2"><use href="#launch"/></svg></button></div>
      </div>
      <!-- styles -->
      <div class="flex w-[115px] shrink-0 flex-col border-r border-[#cdd2d9]">
        <div class="flex h-20 justify-center gap-[5px]">
          <button class="flex-col justify-start! pt-1"><svg class="size-8 shrink-0"><use href="#qstyle"/></svg><span class="mt-px leading-5">快速样式</span><svg class="mt-[6px] h-[3px] w-[5px]"><use href="#caret"/></svg></button>
          <button class="flex-col justify-start! pt-1"><svg class="size-8 shrink-0"><use href="#cstyle"/></svg><span class="mt-px leading-5">更改样式</span><svg class="mt-[6px] h-[3px] w-[5px]"><use href="#caret"/></svg></button>
        </div>
        <div class="grid h-5 grid-cols-[1fr_auto_1fr] items-center pr-[5px] text-[#6a7380]"><span class="col-start-2 pr-4">样式</span><button aria-label="样式对话框" class="justify-self-end"><svg class="size-2"><use href="#launch"/></svg></button></div>
      </div>
      <!-- editing -->
      <div class="flex w-11 shrink-0 justify-center border-r border-[#cdd2d9]">
        <button class="flex-col justify-start! pt-[2px]"><span class="flex h-[31px] w-[31px] items-center justify-center rounded-[3px] border border-[#cdd2d9] bg-white"><svg class="size-4"><use href="#binoc"/></svg></span><span class="mt-[3px] leading-5">编辑</span><svg class="mt-[6px] h-[3px] w-[5px]"><use href="#caret"/></svg></button>
      </div>
    </div>

    <div class="flex min-h-0 flex-1">
      <div class="flex min-w-0 flex-1 flex-col">
        <div class="flex min-h-0 flex-1 overflow-hidden bg-linear-to-b from-[#c9ccd1] to-[#a9abb2] pt-[26px] pr-[22px] pl-1">
          <article class="relative min-w-0 flex-1 bg-[#fefefe] pt-[119px] pr-[131px] pl-[45px] font-['Lato','Noto_Sans_CJK_SC',sans-serif] text-xl leading-[46px] text-[#111] shadow-[0_0_8px_3px_rgba(70,75,85,0.4)]">
            <span class="absolute top-[79px] left-[17px] h-[27px] w-[27px] border-r border-b border-[#a0a0a0]"></span>
            <span class="absolute top-[79px] right-[105px] h-[27px] w-[27px] border-b border-l border-[#a0a0a0]"></span>
            <h1 class="pl-1 text-center text-[37px] font-bold">请柬<svg class="inline size-2"><use href="#ret"/></svg></h1>
            <div class="mt-[10px] [&_i]:text-lg [&_i]:leading-none [&_i]:not-italic [&_p>span]:block [&_p>span]:h-[46px] [&_p>span]:text-justify [&_p>span]:whitespace-nowrap [&_p>span]:[text-align-last:justify]">
              <p><span class="w-[91px]">尊敬的：<svg class="inline size-2"><use href="#ret"/></svg></span></p>
              <p><span>新年将至，我公司定于 <i>2013</i> 年 <i>2</i> 月 <i>5</i> 日下午 <i>2</i>：<i>00</i>，在中关村海龙</span>
              <span class="w-[608px]">大厦办公大楼五层多功能厅举办一个联谊会，请届时参加，谢谢！<svg class="inline size-2"><use href="#ret"/></svg></span></p>
              <p><span class="w-[154px]">董事长：王海龙<svg class="inline size-2"><use href="#ret"/></svg></span></p>
              <p><span class="w-[169px]"><i>2013</i> 年 <i>1</i> 月 <i>26</i> 日<svg class="inline size-2"><use href="#ret"/></svg></span></p>
            </div>
          </article>
        </div>
        <div class="flex h-[17px] shrink-0 items-center bg-[#dfe3e9] text-[#333b47]">
          <button aria-label="向左滚动" class="flex w-[15px] pl-1"><svg class="h-[9px] w-[5px]"><use href="#left"/></svg></button>
          <span class="flex-[95]"></span>
          <div class="flex h-[15px] flex-[684] items-center justify-center rounded-xs border border-[#8f97a3] bg-linear-to-b from-[#fafbfc] to-[#dde2e9]"><svg class="size-2"><use href="#grip4"/></svg></div>
          <button aria-label="向右滚动" class="flex w-[19px] justify-end pr-[6px]"><svg class="h-[9px] w-[5px]"><use href="#right"/></svg></button>
        </div>
      </div>
      <div class="flex w-[18px] shrink-0 flex-col items-center bg-[#dfe3e9] pb-[17px] text-[#333b47]">
        <span class="mt-[5px] h-[2px] w-[9px] bg-[#59616c]"></span>
        <button aria-label="标尺" class="mt-1"><svg class="block size-3"><use href="#rulerbtn"/></svg></button>
        <button aria-label="向上滚动" class="mt-[3px] flex h-[18px] w-full items-center justify-center border-t border-[#c3c8d0]"><svg class="h-[5px] w-[9px]"><use href="#up"/></svg></button>
        <div class="flex w-[15px] flex-[275] items-center justify-center rounded-xs border border-[#8f97a3] bg-linear-to-r from-[#f8fafc] to-[#dde2e9]"><svg class="size-2"><use href="#grip3"/></svg></div>
        <span class="flex-[268]"></span>
        <button aria-label="向下滚动" class="flex h-4 w-full items-center justify-center border-b border-[#c3c8d0]"><svg class="h-[5px] w-[9px]"><use href="#down"/></svg></button>
        <button aria-label="前一页" class="flex h-[17px] items-center"><svg class="size-2"><use href="#dup"/></svg></button>
        <button aria-label="选择浏览对象" class="flex h-[17px] items-center"><span class="size-[7px] rounded-full border border-[#333b47]"></span></button>
        <button aria-label="下一页" class="flex h-[17px] items-center"><svg class="size-2"><use href="#ddn"/></svg></button>
      </div>
    </div>

    <footer class="flex h-[23px] shrink-0 items-center border-t border-[#a4abb6] bg-linear-to-b from-[#eceef1] to-[#c3c8cf] pl-[7px] whitespace-nowrap">
      <span class="w-[60px]">页面: 1/1</span><span class="h-[17px] w-px bg-[#9fa6b1]"></span>
      <span class="w-[82px] pl-2">字数: 74/76</span><span class="h-[17px] w-px bg-[#9fa6b1]"></span>
      <button aria-label="校对" class="mr-3.5 ml-2"><svg class="h-4 w-[18px]"><use href="#proofok"/></svg></button>
      <span class="w-[66px]">中文(中国)</span><span class="h-[17px] w-px bg-[#9fa6b1]"></span>
      <span class="px-[9px]">插入</span><span class="h-[17px] w-px bg-[#9fa6b1]"></span>
      <span class="flex-1"></span><span class="mr-1 h-[17px] w-px bg-[#9fa6b1]"></span>
      <button aria-label="页面视图" class="flex h-[19px] w-5 items-center justify-center rounded-[3px] border border-[#c89a35] bg-linear-to-b from-[#fbe39a] to-[#fbd35a]"><svg class="h-3 w-3.5"><use href="#vprint"/></svg></button>
      <button aria-label="阅读版式" class="ml-[2px] flex"><svg class="h-3 w-3.5"><use href="#vread"/></svg></button>
      <button aria-label="Web 版式" class="ml-1 flex"><svg class="h-3 w-3.5"><use href="#vweb"/></svg></button>
      <button aria-label="大纲视图" class="ml-[5px] flex"><svg class="h-3 w-3.5"><use href="#vout"/></svg></button>
      <button aria-label="草稿" class="ml-1 flex"><svg class="h-3 w-3.5"><use href="#vdraft"/></svg></button>
      <span class="ml-3 w-10">110%</span>
      <button aria-label="缩小" class="flex"><svg class="size-4"><use href="#cminus"/></svg></button>
      <input type="range" aria-label="显示比例" value="50" class="h-3.5 w-[100px] appearance-none bg-linear-to-b from-transparent from-46% via-[#7f8792] via-46% to-transparent to-54% [&::-webkit-slider-thumb]:h-3 [&::-webkit-slider-thumb]:w-[9px] [&::-webkit-slider-thumb]:appearance-none [&::-webkit-slider-thumb]:rounded-b-sm [&::-webkit-slider-thumb]:border [&::-webkit-slider-thumb]:border-[#69717c] [&::-webkit-slider-thumb]:bg-[#f6f6f6]">
      <button aria-label="放大" class="flex"><svg class="size-4"><use href="#cplus"/></svg></button>
      <svg class="ml-2 size-3 self-end"><use href="#corner"/></svg>
    </footer>
  </section>
</main>

<nav aria-label="任务栏" class="relative flex h-[39px] shrink-0 items-center overflow-hidden border-t border-[#5d94bd] bg-linear-to-r from-[#20668f] via-[#1a5a96] via-55% to-[#0f3d78] pl-2 text-white">
  <span aria-hidden="true" class="absolute top-[10px] left-[1015px] h-3 w-[70px] rotate-[40deg] bg-[#9dbddd]/60 blur-[3px]"></span>
  <button aria-label="开始"><svg class="block size-[38px]"><use href="#orb"/></svg></button>
  <button aria-label="浏览器" class="ml-[27px]"><svg class="block size-8"><use href="#pinwheel"/></svg></button>
  <button aria-label="Internet Explorer" class="ml-[30px]"><svg class="block size-8"><use href="#ie"/></svg></button>
  <button aria-label="桌面管理" class="ml-[31px]"><svg class="block size-[30px]"><use href="#tiles"/></svg></button>
  <button aria-label="音乐" class="ml-8"><svg class="block size-8"><use href="#music"/></svg></button>
  <button class="ml-[15px] flex h-[37px] w-40 items-center rounded-[3px] border border-[#9cc3dc] bg-linear-to-b from-[#6fa3c2] to-[#286c98] pl-[9px]"><svg class="mr-[6px] size-[30px]"><use href="#wordbig"/></svg>题干 - Microsoft...</button>
  <button class="flex h-[37px] w-40 items-center rounded-[3px] border border-[#cfe4f1] bg-linear-to-br from-[#a3c4d8] via-[#78a6c4] to-[#4f8cb2] pl-[9px]"><svg class="mr-[6px] size-[30px]"><use href="#wordbig"/></svg>文档7 - Microso...</button>
  <button class="ml-[2px] flex h-[37px] w-[159px] items-center rounded-[3px] border border-[#8db7d8] bg-linear-to-b from-[#5f94bf] to-[#215f9b] pl-[9px]"><svg class="mr-[10px] h-8 w-[26px]"><use href="#folder"/></svg>F:\xhy\Word\邮...</button>
  <div class="ml-auto flex items-center gap-2">
    <button aria-label="极点输入法" class="mr-1 bg-[#c4161c] text-sm leading-4">極</button>
    <button aria-label="摄像头"><svg class="block h-4 w-[18px]"><use href="#cam"/></svg></button>
    <button aria-label="桌面管理"><svg class="block size-4"><use href="#tiles"/></svg></button>
    <button aria-label="日历"><svg class="block size-4"><use href="#calwin"/></svg></button>
    <button aria-label="安全"><svg class="block size-4"><use href="#shield"/></svg></button>
    <button aria-label="云盘"><svg class="block size-4"><use href="#flower"/></svg></button>
    <button aria-label="信号"><svg class="block size-4"><use href="#dish"/></svg></button>
    <button aria-label="网络"><svg class="block size-4"><use href="#net"/></svg></button>
    <button aria-label="音量"><svg class="block size-4"><use href="#vol"/></svg></button>
  </div>
  <div class="ml-[14px] text-center leading-[18px]">上午 10:38<br>2018/1/30 星期二</div>
  <button aria-label="显示桌面" class="mr-[2px] ml-[9px] h-full w-3 border border-[#5d83ad] bg-linear-to-b from-[#3b6595] to-[#0c2c58]"></button>
</nav>
</body>
</html>
